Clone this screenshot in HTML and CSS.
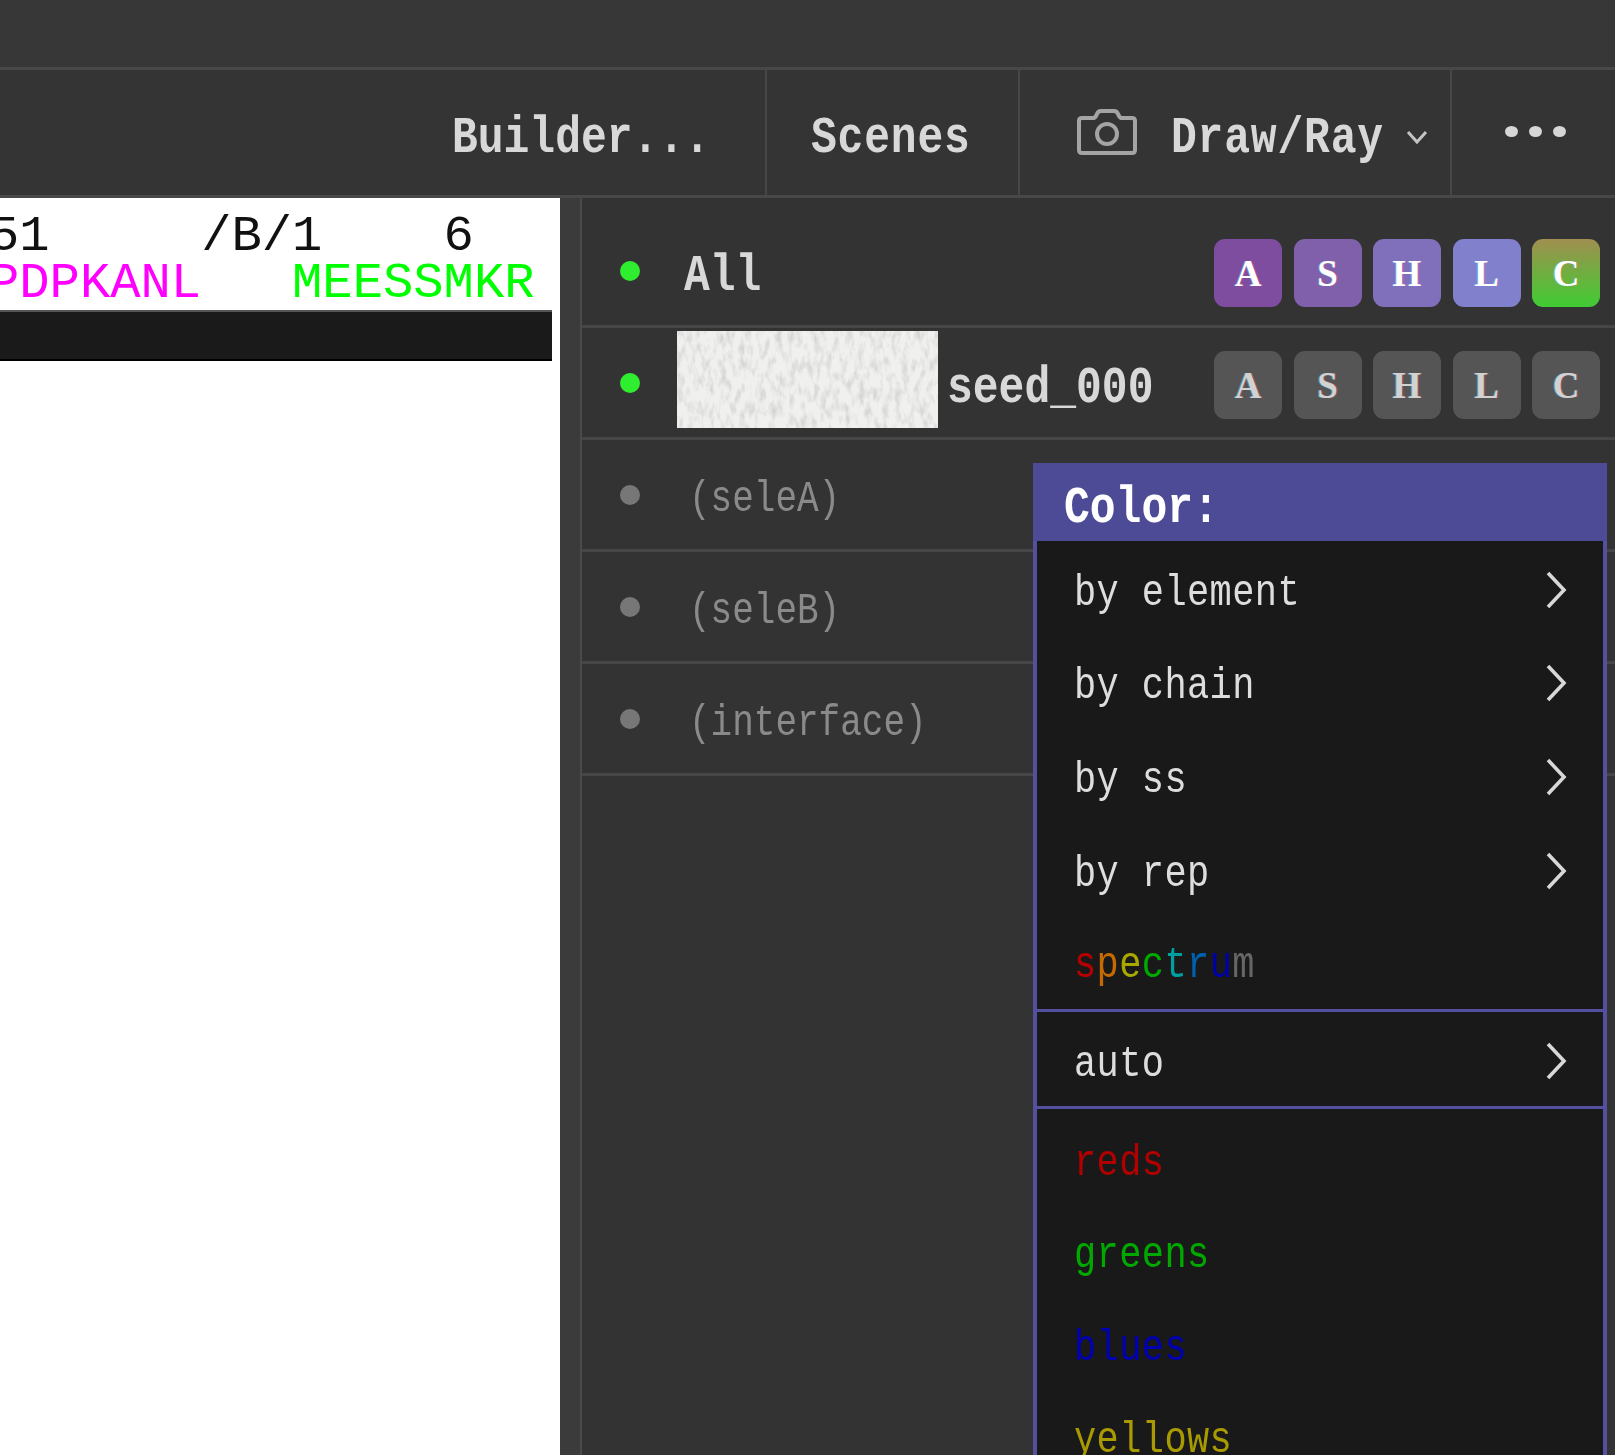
FILE: index.html
```html
<!DOCTYPE html>
<html lang="en">
<head>
<meta charset="utf-8">
<title>PyMOL</title>
<link rel="stylesheet" href="styles.css">
</head>
<body>
<div class="page">
  <header class="topbar"></header>
  <nav class="toolbar">
    <div class="tool tool-builder"><span class="txt">Builder...</span></div>
    <div class="tool tool-scenes"><span class="txt">Scenes</span></div>
    <div class="tool tool-draw">
      <svg class="camera" viewBox="0 0 62 48" width="62" height="48" aria-hidden="true">
        <path d="M3 13 Q3 10 6 10 H17 Q19 10 20 8 L21 6 Q22 3 25 3 H38 Q41 3 42 6 L43 8 Q44 10 46 10 H56 Q59 10 59 13 V42 Q59 45 56 45 H6 Q3 45 3 42 Z" fill="none" stroke="#a4a4a4" stroke-width="4"/>
        <circle cx="31" cy="26" r="10" fill="none" stroke="#a4a4a4" stroke-width="4"/>
      </svg>
      <span class="txt">Draw/Ray</span>
      <svg class="caret" viewBox="0 0 22 14" width="22" height="14" aria-hidden="true">
        <path d="M2 2 L11 12 L20 2" fill="none" stroke="#c4c4c4" stroke-width="3"/>
      </svg>
    </div>
    <div class="tool tool-more"><i class="pip"></i><i class="pip"></i><i class="pip"></i></div>
  </nav>
  <main class="main">
    <section class="viewer">
      <pre class="seq"><span class="seq-black">51     /B/1    6</span>
<span class="seq-pink">PDPKANL</span>   <span class="seq-green">MEESSMKR</span></pre>
      <div class="cmdbar"></div>
    </section>
    <div class="gutter"></div>
    <section class="objects">
      <div class="row">
        <i class="dot on"></i><span class="name name-all txt">All</span>
        <div class="toggles">
          <span class="tg tg-a">A</span><span class="tg tg-s">S</span><span class="tg tg-h">H</span><span class="tg tg-l">L</span><span class="tg tg-c">C</span>
        </div>
      </div>
      <div class="row">
        <i class="dot on"></i>
        <svg class="thumb" width="261" height="97" aria-hidden="true">
          <filter id="grain" x="0" y="0" width="100%" height="100%">
            <feTurbulence type="fractalNoise" baseFrequency="0.16 0.07" numOctaves="3" seed="7"/>
            <feColorMatrix type="matrix" values="0 0 0 0 0.66  0 0 0 0 0.66  0 0 0 0 0.65  2.6 0 0 0 -1.15"/>
          </filter>
          <rect width="261" height="97" fill="#f0f0ee"/>
          <rect width="261" height="97" filter="url(#grain)"/>
        </svg>
        <span class="name name-seed txt">seed_000</span>
        <div class="toggles">
          <span class="tg off">A</span><span class="tg off">S</span><span class="tg off">H</span><span class="tg off">L</span><span class="tg off">C</span>
        </div>
      </div>
      <div class="row"><i class="dot"></i><span class="name name-sel txt">(seleA)</span></div>
      <div class="row"><i class="dot"></i><span class="name name-sel txt">(seleB)</span></div>
      <div class="row"><i class="dot"></i><span class="name name-sel txt">(interface)</span></div>
    </section>
  </main>
  <aside class="menu">
    <div class="menu-title"><span class="txt">Color:</span></div>
    <div class="menu-group">
      <div class="mi"><span class="txt">by element</span><svg class="chev" viewBox="0 0 22 38" width="22" height="38"><path d="M3 2 L19 19 L3 36" fill="none" stroke="#d8d8d8" stroke-width="3.6"/></svg></div>
      <div class="mi"><span class="txt">by chain</span><svg class="chev" viewBox="0 0 22 38" width="22" height="38"><path d="M3 2 L19 19 L3 36" fill="none" stroke="#d8d8d8" stroke-width="3.6"/></svg></div>
      <div class="mi"><span class="txt">by ss</span><svg class="chev" viewBox="0 0 22 38" width="22" height="38"><path d="M3 2 L19 19 L3 36" fill="none" stroke="#d8d8d8" stroke-width="3.6"/></svg></div>
      <div class="mi"><span class="txt">by rep</span><svg class="chev" viewBox="0 0 22 38" width="22" height="38"><path d="M3 2 L19 19 L3 36" fill="none" stroke="#d8d8d8" stroke-width="3.6"/></svg></div>
      <div class="mi mi-spectrum"><span class="txt"><b class="c1">s</b><b class="c2">p</b><b class="c3">e</b><b class="c4">c</b><b class="c5">t</b><b class="c6">r</b><b class="c7">u</b><b class="c8">m</b></span></div>
    </div>
    <div class="menu-group">
      <div class="mi"><span class="txt">auto</span><svg class="chev" viewBox="0 0 22 38" width="22" height="38"><path d="M3 2 L19 19 L3 36" fill="none" stroke="#d8d8d8" stroke-width="3.6"/></svg></div>
    </div>
    <div class="menu-group last">
      <div class="mi reds"><span class="txt">reds</span></div>
      <div class="mi greens"><span class="txt">greens</span></div>
      <div class="mi blues"><span class="txt">blues</span></div>
      <div class="mi yellows"><span class="txt">yellows</span></div>
    </div>
  </aside>
</div>
</body>
</html>
```
FILE: styles.css
```css
* { box-sizing: border-box; }
html, body { margin: 0; padding: 0; background: #333; }
.page {
  position: relative;
  width: 1615px;
  height: 1455px;
  overflow: hidden;
  background: #333;
  font-family: "Liberation Mono", monospace;
  color: #ddd;
}
.txt {
  display: inline-block;
  transform: translateY(5px) scaleY(1.22);
  filter: blur(0.55px);
  white-space: pre;
}
.topbar {
  height: 70px;
  background: #373737;
  border-bottom: 3px solid #484848;
}
.toolbar {
  display: flex;
  justify-content: flex-end;
  height: 128px;
  border-bottom: 3px solid #484848;
  background: #343434;
}
.tool {
  display: flex;
  align-items: center;
  font-size: 43px;
  font-weight: 700;
  color: #d8d8d8;
  border-right: 2px solid #474747;
}
.tool-builder { padding-right: 55px; }
.tool-scenes { width: 253px; padding-left: 44px; letter-spacing: .8px; }
.tool-draw { width: 432px; padding-left: 56px; letter-spacing: .8px; }
.tool-more { width: 163px; border-right: 0; padding-left: 53px; gap: 11px; padding-bottom: 2px; }
.camera { margin-right: 33px; margin-top: -2px; filter: blur(0.4px); }
.caret { margin-left: 22px; margin-top: 8px; filter: blur(0.3px); }
.pip { width: 13px; height: 11px; border-radius: 50%; background: #d6d6d6; }
.main { display: flex; height: 1257px; }
.viewer { width: 560px; background: #fff; overflow: hidden; }
.seq {
  margin: 0;
  margin-left: -11px;
  padding-top: 15px;
  font: 400 50.5px/47px "Liberation Mono", monospace;
  color: #111;
  filter: blur(0.3px);
}
.seq-pink { color: #f0f; }
.seq-green { color: #0f0; }
.cmdbar {
  height: 51px;
  margin: 3px 8px 0 0;
  background: #1a1a1a;
  border-top: 2px solid #555;
  border-bottom: 2px solid #000;
}
.gutter {
  width: 22px;
  background: #3b3b3b;
  border-right: 2px solid #4a4a4a;
}
.objects { flex: 1; padding-top: 18px; background: #333; }
.row {
  display: flex;
  align-items: center;
  height: 112px;
  border-bottom: 3px solid #464646;
  padding-left: 38px;
  padding-right: 15px;
}
.dot {
  flex: none;
  width: 20px;
  height: 20px;
  border-radius: 50%;
  background: #777;
}
.dot.on { background: #2fee2f; }
.name { font-size: 43px; font-weight: 700; color: #d8d8d8; }
.name-all { margin-left: 44px; }
.name-seed { margin-left: 9px; }
.name-sel { margin-left: 49px; font-size: 36px; font-weight: 400; color: #8a8a8a; }
.thumb { flex: none; margin-left: 37px; margin-top: -7px; display: block; }
.toggles { display: flex; gap: 11.5px; margin-left: auto; margin-top: 5px; }
.tg {
  width: 68px;
  height: 68px;
  border-radius: 11px;
  display: flex;
  align-items: center;
  justify-content: center;
  font-family: "Liberation Serif", serif;
  font-size: 37px;
  font-weight: 700;
  color: #fff;
  text-shadow: -1px 0 rgba(80, 220, 255, .45), 1px 0 rgba(255, 90, 120, .4);
}
.tg-a { background: #7f4da0; }
.tg-s { background: #8060ab; }
.tg-h { background: #8070bb; }
.tg-l { background: #8080cc; }
.tg-c { background: linear-gradient(#a18f4f, #3fcc33); }
.tg.off { background: #555; color: #d2d2d2; }
.menu {
  position: absolute;
  left: 1033px;
  top: 463px;
  width: 574px;
  bottom: 0;
  background: #5350a0;
  padding: 0 4px;
}
.menu-title {
  height: 78px;
  margin: 0 -4px;
  padding-left: 31px;
  background: #4e4b96;
  display: flex;
  align-items: center;
  font-size: 43px;
  font-weight: 700;
  color: #fff;
}
.menu-group { background: #191919; margin-bottom: 3px; }
.menu-group.last { padding-top: 3px; }
.mi {
  display: flex;
  align-items: center;
  justify-content: space-between;
  height: 93.6px;
  padding: 0 36px 0 37px;
  font-size: 37px;
  letter-spacing: .4px;
  color: #ddd;
  font-weight: 400;
}
.menu-group.last .mi { height: 92.4px; }
.mi-spectrum { padding-bottom: 4px; }
.chev { filter: blur(0.3px); margin-top: 4px; }
.mi b { font-weight: 400; }
.c1 { color: #b80000; }
.c2 { color: #c46a00; }
.c3 { color: #a8a800; }
.c4 { color: #00a800; }
.c5 { color: #00a0a0; }
.c6 { color: #0060b0; }
.c7 { color: #0000a8; }
.c8 { color: #666; }
.reds { color: #b00000; }
.greens { color: #00a800; }
.blues { color: #0000b0; }
.yellows { color: #a89a00; }
```
